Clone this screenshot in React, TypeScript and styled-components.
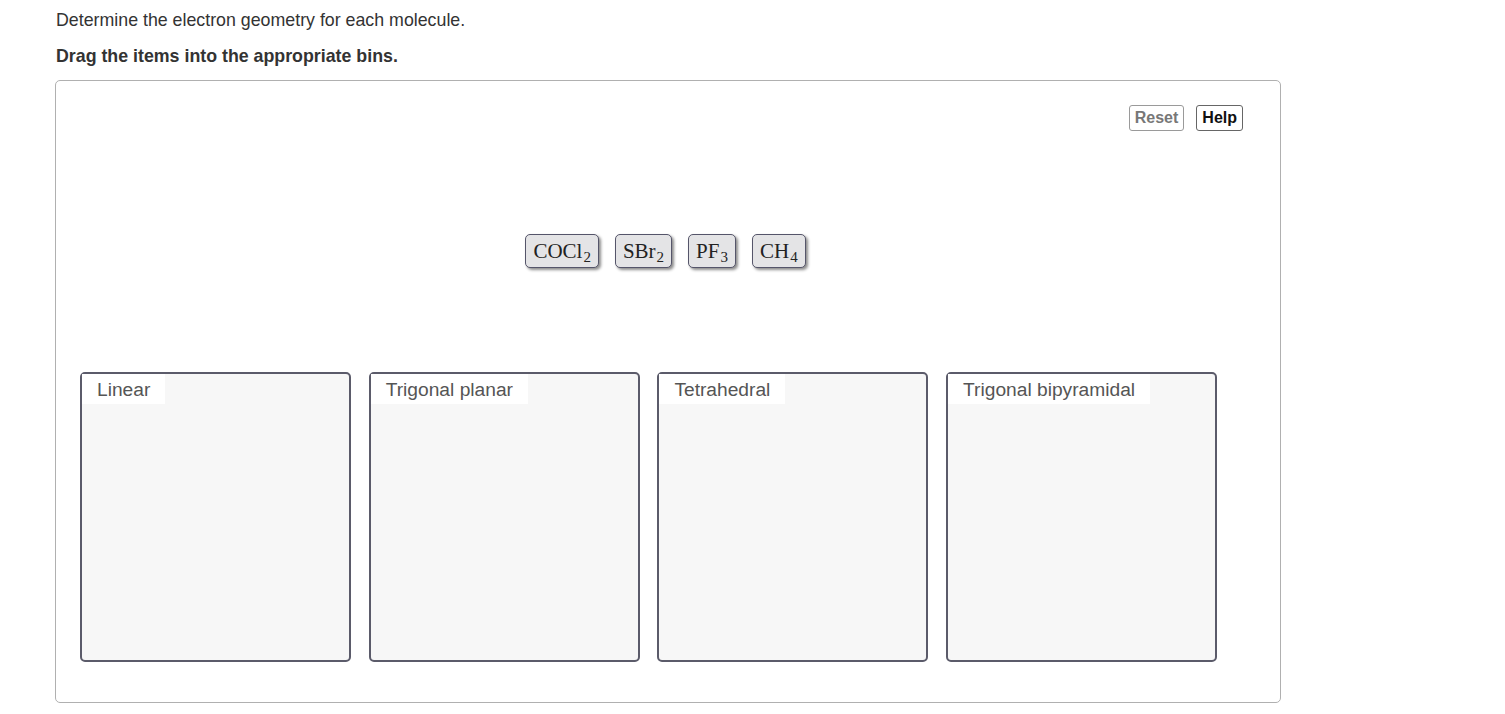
import React from "react";
import styled, { createGlobalStyle } from "styled-components";

const Global = createGlobalStyle`
  html, body { margin: 0; padding: 0; background: #fff; }
  body { font-family: "Liberation Sans", Arial, sans-serif; }
`;

const Page = styled.div`
  padding: 9px 0 0 55px;
  width: 1226px;
`;

const Intro = styled.p`
  margin: 0 0 0 1px;
  font-size: 17.8px;
  line-height: 22px;
  color: #333;
`;

const Instruction = styled.p`
  margin: 14px 0 0 1px;
  font-size: 17.8px;
  line-height: 22px;
  font-weight: bold;
  color: #333;
`;

const Panel = styled.div`
  margin-top: 13px;
  border: 1px solid #b0b0b0;
  border-radius: 5px;
  padding: 24px 37px 40px 24px;
  display: flex;
  flex-direction: column;
  box-sizing: border-box;
  height: 623px;
`;

const Toolbar = styled.div`
  display: flex;
  justify-content: flex-end;
  gap: 12px;
`;

const ToolButton = styled.button<{ $muted?: boolean }>`
  font-family: "Liberation Sans", Arial, sans-serif;
  font-weight: bold;
  font-size: 16px;
  height: 26px;
  padding: 0 5px;
  background: #fff;
  border: 1px solid ${(p) => (p.$muted ? "#9a9a9a" : "#666")};
  color: ${(p) => (p.$muted ? "#777" : "#111")};
  border-radius: 3px;
  cursor: pointer;
`;

const Tray = styled.div`
  display: flex;
  justify-content: center;
  gap: 16px;
  margin-top: 103px;
  padding-left: 8px;
`;

const Tile = styled.div`
  font-family: "Liberation Serif", "Times New Roman", serif;
  font-size: 21px;
  line-height: 32px;
  height: 34px;
  padding: 0 7px;
  box-sizing: border-box;
  background: #e4e4e6;
  border: 1px solid #55556a;
  border-radius: 5px;
  box-shadow: 2px 2px 3px rgba(0, 0, 0, 0.45);
  color: #222;
  display: inline-block;
  white-space: nowrap;
`;

const Sub = styled.span`
  font-size: 15px;
  line-height: 0;
  position: relative;
  top: 4px;
  margin-left: 1px;
`;

const Bins = styled.div`
  display: flex;
  gap: 17.7px;
  margin-top: 104px;
`;

const Bin = styled.div`
  width: 271px;
  height: 290px;
  box-sizing: border-box;
  background: #f7f7f7;
  border: 2px solid #5b5b6a;
  border-radius: 5px;
`;

const BinLabel = styled.div`
  display: inline-block;
  background: #fff;
  padding: 1px 15px 0 15px;
  height: 29px;
  line-height: 30px;
  font-size: 19.2px;
  color: #555;
`;

const tiles: [string, string][] = [
  ["COCl", "2"],
  ["SBr", "2"],
  ["PF", "3"],
  ["CH", "4"],
];

const bins = ["Linear", "Trigonal planar", "Tetrahedral", "Trigonal bipyramidal"];

export default function App() {
  return (
    <>
      <Global />
      <Page>
        <Intro>Determine the electron geometry for each molecule.</Intro>
        <Instruction>Drag the items into the appropriate bins.</Instruction>
        <Panel>
          <Toolbar>
            <ToolButton $muted>Reset</ToolButton>
            <ToolButton>Help</ToolButton>
          </Toolbar>
          <Tray>
            {tiles.map(([base, sub]) => (
              <Tile key={base}>
                {base}
                <Sub>{sub}</Sub>
              </Tile>
            ))}
          </Tray>
          <Bins>
            {bins.map((b) => (
              <Bin key={b}>
                <BinLabel>{b}</BinLabel>
              </Bin>
            ))}
          </Bins>
        </Panel>
      </Page>
    </>
  );
}
